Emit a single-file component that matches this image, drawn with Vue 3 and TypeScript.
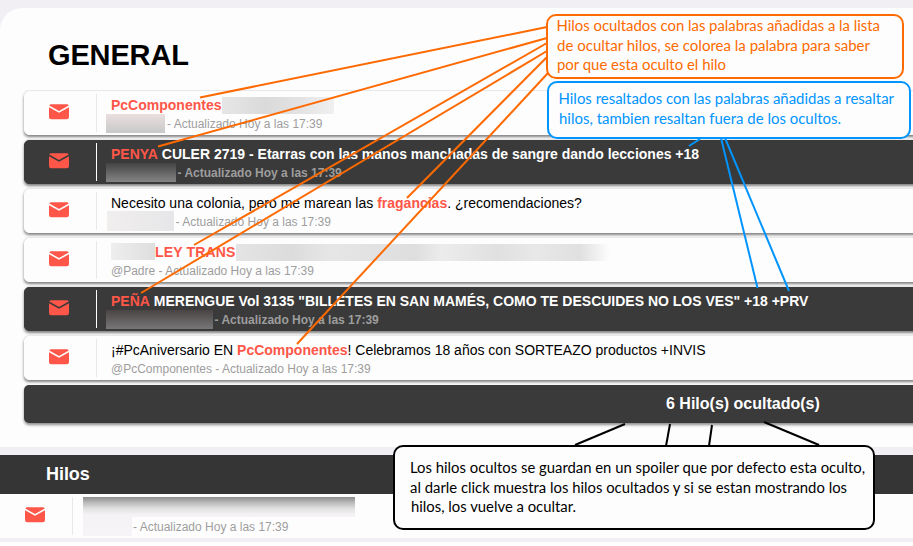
<script setup lang="ts">
interface Part {
  text?: string
  hit?: boolean
  blur?: string
}

interface Thread {
  dark?: boolean
  title: Part[]
  meta: Part[]
}

interface Line {
  x1: number
  y1: number
  x2: number
  y2: number
}

interface NoteLine {
  text: string
  x: number
  y: number
  width: number
}

interface Note {
  tone: string
  x: number
  y: number
  width: number
  height: number
  radius: number
  lines: NoteLine[]
}

const updated = '- Actualizado Hoy a las 17:39'

const threads: Thread[] = [
  {
    title: [{ text: 'PcComponentes', hit: true }, { blur: 'b1' }],
    meta: [{ blur: 'm1' }, { text: updated }],
  },
  {
    dark: true,
    title: [
      { text: 'PENYA', hit: true },
      { text: ' CULER 2719 - Etarras con las manos manchadas de sangre dando lecciones +18' },
    ],
    meta: [{ blur: 'm2' }, { text: updated }],
  },
  {
    title: [
      { text: 'Necesito una colonia, pero me marean las ' },
      { text: 'fragancias', hit: true },
      { text: '. ¿recomendaciones?' },
    ],
    meta: [{ blur: 'm3' }, { text: updated }],
  },
  {
    title: [{ blur: 'b4' }, { text: 'LEY TRANS', hit: true }, { blur: 'b5' }],
    meta: [{ text: '@Padre ' + updated }],
  },
  {
    dark: true,
    title: [
      { text: 'PEÑA', hit: true },
      { text: ' MERENGUE Vol 3135 "BILLETES EN SAN MAMÉS, COMO TE DESCUIDES NO LOS VES" +18 +PRV' },
    ],
    meta: [{ blur: 'm5' }, { text: updated }],
  },
  {
    title: [
      { text: '¡#PcAniversario EN ' },
      { text: 'PcComponentes', hit: true },
      { text: '! Celebramos 18 años con SORTEAZO productos +INVIS' },
    ],
    meta: [{ text: '@PcComponentes ' + updated }],
  },
]

const orange: Line[] = [
  { x1: 547, y1: 27, x2: 200, y2: 97.5 },
  { x1: 547, y1: 38, x2: 158, y2: 146.5 },
  { x1: 547, y1: 43, x2: 194, y2: 245 },
  { x1: 547, y1: 51, x2: 141, y2: 293 },
  { x1: 547, y1: 57, x2: 407, y2: 198 },
  { x1: 548, y1: 73, x2: 297, y2: 344 },
]

const blue: Line[] = [
  { x1: 700, y1: 139, x2: 689, y2: 146 },
  { x1: 721, y1: 138, x2: 757.5, y2: 288 },
  { x1: 725, y1: 138, x2: 789, y2: 291 },
]

const black: Line[] = [
  { x1: 625, y1: 424, x2: 575, y2: 445 },
  { x1: 670, y1: 424, x2: 666, y2: 446 },
  { x1: 712, y1: 425, x2: 709, y2: 446 },
  { x1: 764, y1: 422, x2: 819, y2: 445 },
]

const notes: Note[] = [
  {
    tone: 'orange', x: 547, y: 15, width: 356, height: 63, radius: 9,
    lines: [
      { text: 'Hilos ocultados con las palabras añadidas a la lista', x: 556.5, y: 31, width: 323.5 },
      { text: 'de ocultar hilos, se colorea la palabra para saber', x: 557, y: 51, width: 313 },
      { text: 'por que esta oculto el hilo', x: 557, y: 70, width: 169 },
    ],
  },
  {
    tone: 'blue', x: 548, y: 82, width: 362, height: 56, radius: 9,
    lines: [
      { text: 'Hilos resaltados con las palabras añadidas a resaltar', x: 558.5, y: 104, width: 335.5 },
      { text: 'hilos, tambien resaltan fuera de los ocultos.', x: 559, y: 124, width: 282 },
    ],
  },
  {
    tone: 'black', x: 394, y: 446, width: 480, height: 83, radius: 9,
    lines: [
      { text: 'Los hilos ocultos se guardan en un spoiler que por defecto esta oculto,', x: 410, y: 473, width: 455 },
      { text: 'al darle click muestra los hilos ocultados y si se estan mostrando los', x: 410, y: 493, width: 437 },
      { text: 'hilos, los vuelve a ocultar.', x: 411, y: 512, width: 165 },
    ],
  },
]
</script>

<template>
  <div class="page">
    <section class="forum">
      <h1>GENERAL</h1>
      <div class="list">
        <article v-for="(t, i) in threads" :key="i" class="row" :class="{ dark: t.dark }">
          <svg class="mail" width="20" height="16" viewBox="0 0 20 16">
            <path d="M0 3.2 10 8.7 20 3.2V13a2.3 2.3 0 0 1-2.3 2.3H2.3A2.3 2.3 0 0 1 0 13Z" />
            <path d="M.3 1.6A2 2 0 0 1 2.2.3h15.6a2 2 0 0 1 1.9 1.3L10 6.9Z" />
          </svg>
          <div class="body">
            <div class="title" :class="'t' + (i + 1)">
              <template v-for="(p, j) in t.title" :key="j">
                <i v-if="p.blur" class="blur" :class="p.blur"></i>
                <b v-else-if="p.hit" class="hit">{{ p.text }}</b>
                <span v-else>{{ p.text }}</span>
              </template>
            </div>
            <div class="meta">
              <template v-for="(p, j) in t.meta" :key="j">
                <i v-if="p.blur" class="blur" :class="p.blur"></i>
                <span v-else>{{ p.text }}</span>
              </template>
            </div>
          </div>
        </article>
        <div class="spoiler">6 Hilo(s) ocultado(s)</div>
      </div>
    </section>
    <section class="threads">
      <h2>Hilos</h2>
      <article class="plain">
        <svg class="mail" width="20" height="16" viewBox="0 0 20 16">
          <path d="M0 3.2 10 8.7 20 3.2V13a2.3 2.3 0 0 1-2.3 2.3H2.3A2.3 2.3 0 0 1 0 13Z" />
          <path d="M.3 1.6A2 2 0 0 1 2.2.3h15.6a2 2 0 0 1 1.9 1.3L10 6.9Z" />
        </svg>
        <div class="redacted">
          <div class="smear">
            <div class="meta"><span>{{ updated }}</span></div>
          </div>
        </div>
      </article>
      <div class="next"></div>
    </section>

    <svg class="overlay" width="913" height="546" viewBox="0 0 913 546">
      <g class="orange">
        <line v-for="(l, i) in orange" :key="i" v-bind="l" />
      </g>
      <g class="blue">
        <line v-for="(l, i) in blue" :key="i" v-bind="l" />
      </g>
      <g class="black">
        <line v-for="(l, i) in black" :key="i" v-bind="l" />
      </g>
      <g v-for="n in notes" :key="n.tone" :class="n.tone">
        <rect :x="n.x" :y="n.y" :width="n.width" :height="n.height" :rx="n.radius" />
        <text
          v-for="l in n.lines"
          :key="l.y"
          :x="l.x"
          :y="l.y"
          :textLength="l.width"
          lengthAdjust="spacingAndGlyphs"
        >{{ l.text }}</text>
      </g>
    </svg>
  </div>
</template>

<style>
body {
  background: #fdfdfd;
}
</style>

<style scoped>
.page {
  position: relative;
  box-sizing: border-box;
  width: 913px;
  height: 546px;
  padding-top: 8px;
  overflow: hidden;
  background: #f1eff4;
  font-family: "Liberation Sans", Arial, sans-serif;
}
.forum {
  box-sizing: border-box;
  height: 439px;
  padding: 29px 0 0 24px;
  border-radius: 22px 0 0 0;
  background: #fdfdfd;
}
h1 {
  margin: 0 0 18px 24px;
  font-size: 29px;
  line-height: 36px;
  font-weight: 700;
  letter-spacing: -0.15px;
  color: #000;
}
.list {
  display: flex;
  flex-direction: column;
  gap: 5px;
}
.row {
  display: flex;
  align-items: flex-start;
  box-sizing: border-box;
  height: 44px;
  margin-right: -10px;
  border: 1px solid #fdfdfd;
  border-bottom-color: #fdfdfd;
  border-radius: 5px;
  background: #fdfdfd;
  box-shadow: 0 2px 3px rgba(0, 0, 0, 0.5), 0 -1px 0 #ededf0;
}
.row.dark {
  border-color: #3a3a3a;
  background: #3a3a3a;
}
.mail {
  flex: none;
  margin: 12px 0 0 24px;
  fill: #fe5648;
}
.body {
  box-sizing: border-box;
  height: 38px;
  margin: 2px 0 0 27px;
  padding: 0 0 0 14px;
  border-left: 1px solid #e8e8e8;
}
.dark .body {
  border-left-color: #fff;
}
.title,
.meta {
  display: flex;
  align-items: center;
  white-space: pre;
}
.title {
  height: 20px;
  padding-top: 1px;
  box-sizing: border-box;
  font-size: 14px;
  line-height: 18px;
  color: #000;
}
.t4 .hit {
  letter-spacing: 0.15px;
}
.meta {
  height: 18px;
  font-size: 12px;
  line-height: 18px;
  color: #9d9d9d;
}
.body .meta {
  height: 20px;
}
.dark .title {
  font-weight: 700;
  color: #fff;
}
.dark .meta {
  font-weight: 700;
}
.hit {
  color: #fe5648;
}
.blur {
  flex: none;
  background: linear-gradient(#e9e9e9, #d8d8d8);
}
.b1 { width: 112px; height: 17px; margin: 2px 0 0 1px; background: linear-gradient(90deg, #e6e6e6, #dadada 40%, #e3e3e3 70%, #f0f0f0); }
.b4 { width: 44px; height: 17px; background: linear-gradient(90deg, #eee, #dedede); }
.b5 { width: 374px; height: 17px; margin: 1px 0 0 1px; background: linear-gradient(90deg, #e4e4e4, #dcdcdc 15%, #e6e6e6 25%, #dedede 48%, #ececec 55%, #e0e0e0 70%, #e8e8e8 80%, #e0e0e0 92%, #fdfdfd); }
.m1 { width: 59px; height: 19px; margin: -2px 2px 0 -5px; background: linear-gradient(#eadfdf, #c8c8c8); }
.m2 { width: 70px; height: 19px; margin: -2px 1.5px 0 -5px; background: linear-gradient(#444, #858585); }
.m3 { width: 67px; height: 20px; margin: -3px 1.5px 0 -4px; background: linear-gradient(90deg, #f1eeee, #e6e6e8); }
.m5 { width: 107px; height: 19px; margin: -2px 1.5px 0 -5px; background: linear-gradient(#4a4444, #777); }
.spoiler {
  height: 38px;
  margin-right: -10px;
  padding-left: 642px;
  border-radius: 5px;
  background: #3a3a3a;
  box-shadow: 0 2px 3px rgba(0, 0, 0, 0.45);
  color: #fff;
  font-size: 16px;
  font-weight: 700;
  line-height: 38px;
}
.threads {
  margin-top: 8px;
}
h2 {
  margin: 0;
  padding-left: 46px;
  background: #353535;
  color: #fff;
  font-size: 18px;
  line-height: 39px;
  font-weight: 700;
  letter-spacing: -0.05px;
}
.plain {
  display: flex;
  box-sizing: border-box;
  height: 44px;
  padding: 3px 0 3px 25px;
  background: #fdfdfd;
}
.plain .mail {
  margin: 10px 27px 0 0;
}
.next {
  height: 4px;
  margin-top: 4px;
  background: #fdfdfd;
}
.redacted {
  box-sizing: border-box;
  width: 283px;
  padding-left: 10px;
  border-left: 1px solid #e8e8e8;
}
.smear {
  display: flex;
  align-items: flex-end;
  justify-content: flex-end;
  width: 272px;
  height: 39px;
  background: linear-gradient(#8d8d8d, #bcbcbc 15%, #e2e2e2 30%, #f4f2f4 45%, #f6f4f7);
}
.smear .meta {
  width: 223px;
  height: 19px;
  padding-left: 1px;
  box-sizing: border-box;
  background: #fdfdfd;
}
.overlay {
  position: absolute;
  inset: 0;
}
.overlay line {
  stroke-width: 2;
}
.overlay rect {
  fill: #fdfdfd;
  stroke-width: 2;
}
.overlay text {
  font-family: Lato, Carlito, Calibri, sans-serif;
  font-size: 15.5px;
}
.orange line,
.orange rect { stroke: #fe6a00; }
.orange text { fill: #fe6a00; }
.blue line,
.blue rect { stroke: #0094fe; }
.blue text { fill: #0094fe; }
.black line,
.black rect { stroke: #000; }
.black text { fill: #000; }
</style>
